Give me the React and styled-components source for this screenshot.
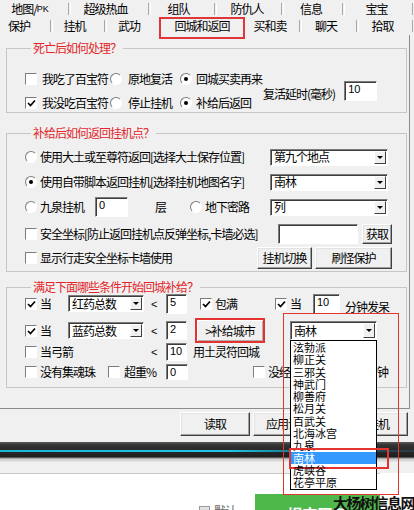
import styled, { createGlobalStyle } from 'styled-components';

const cjk = `"Noto Sans CJK SC", "Noto Sans", sans-serif`;

const GlobalStyle = createGlobalStyle`
  html, body {
    margin: 0;
    padding: 0;
  }
  body {
    background: #f0f0f0;
    font-family: ${cjk};
    font-size: 12px;
    color: #000;
  }
`;

const Screen = styled.div`
  position: relative;
  width: 414px;
  height: 510px;
  overflow: hidden;
  background: #f0f0f0;
`;

// ---- tabs
const TabRow = styled.div`
  display: flex;
  align-items: center;
  height: ${({ $h }) => $h}px;
`;

const Tab = styled.div`
  flex: none;
  width: ${({ $w }) => $w}px;
  height: 100%;
  box-sizing: border-box;
  display: flex;
  align-items: center;
  justify-content: center;
  padding-right: ${({ $pr = 7 }) => $pr}px;
  letter-spacing: -1px;
  line-height: 14px;
  white-space: nowrap;
`;

const ActiveTab = styled(Tab)`
  position: relative;
  z-index: 2;
  align-self: flex-start;
  height: 22px;
  padding: 0 0 4px;
  border: 2px solid #e0363a;
  background: #f0f0f0;
`;

const TabSep = styled.span`
  flex: none;
  width: 1px;
  height: 12px;
  border-left: 1px solid #a8a8a8;
  border-right: 1px solid #fff;
`;

const Small = styled.span`
  font-family: "Liberation Sans", Arial, sans-serif;
  font-size: 9px;
  letter-spacing: 0;
`;

// ---- panel + groups
const Panel = styled.div`
  width: 410px;
  box-sizing: border-box;
  padding: 6px 2px 20px 6px;
  border-right: 1px solid #8c8c8c;
  border-bottom: 1px solid #8c8c8c;
`;

const Group = styled.fieldset`
  margin: ${({ $mt = 0 }) => $mt}px 0 0;
  padding: ${({ $pt }) => $pt}px 0 ${({ $pb }) => $pb}px 18px;
  border: 1px solid #c6c6c6;
  min-width: 0;
`;

const Legend = styled.legend`
  color: #e3262a;
  padding: 0 2px;
  margin-left: 6px;
  font-size: 12px;
  line-height: 14px;
  letter-spacing: -1px;
`;

const Split = styled.div`
  display: flex;
  align-items: center;
`;

const Col = styled.div`
  width: 238px;
  display: flex;
  flex-direction: column;
`;

const Row = styled.div`
  display: flex;
  align-items: center;
  height: ${({ $h }) => $h}px;
  margin-top: ${({ $mt = 0 }) => $mt}px;
`;

const Text = styled.span`
  flex: none;
  width: ${({ $w }) => ($w ? `${$w}px` : 'auto')};
  margin-left: ${({ $ml = 0 }) => $ml}px;
  margin-top: ${({ $mt = 0 }) => $mt}px;
  letter-spacing: -1px;
  line-height: 14px;
  white-space: nowrap;
`;

const Lt = styled.span`
  flex: none;
  width: 22px;
  box-sizing: border-box;
  padding-left: 7px;
  font-family: "Liberation Sans", Arial, sans-serif;
  font-size: 11px;
`;

// ---- controls
const Opt = styled.div`
  flex: none;
  display: flex;
  align-items: center;
  gap: ${({ $gap = 4 }) => $gap}px;
  width: ${({ $w }) => ($w ? `${$w}px` : 'auto')};
  margin-left: ${({ $ml = 0 }) => $ml}px;
  white-space: nowrap;
`;

const Label = styled.span`
  letter-spacing: -1px;
  line-height: 14px;
`;

const CheckBox = styled.span`
  flex: none;
  width: 12px;
  height: 12px;
  box-sizing: border-box;
  background: #fff;
  border: 1px solid;
  border-color: #7c7c7c #fff #fff #7c7c7c;
  display: flex;
  align-items: center;
  justify-content: center;
`;

const RadioDot = styled.span`
  flex: none;
  width: 12px;
  height: 12px;
  box-sizing: border-box;
  border-radius: 50%;
  background: #fff;
  border: 1px solid;
  border-color: #7c7c7c #fff #fff #7c7c7c;
  display: flex;
  align-items: center;
  justify-content: center;

  &::after {
    content: '';
    width: 4px;
    height: 4px;
    border-radius: 50%;
    background: ${({ $on }) => ($on ? '#000' : 'transparent')};
  }
`;

function Check({ checked, w, ml, gap, children }) {
  return (
    <Opt $w={w} $ml={ml} $gap={gap}>
      <CheckBox>
        {checked && (
          <svg width="9" height="8" viewBox="0 0 9 8">
            <polyline points="1,4 3.5,6.5 8,1.5" fill="none" stroke="#000" strokeWidth="1.7" />
          </svg>
        )}
      </CheckBox>
      {children && <Label>{children}</Label>}
    </Opt>
  );
}

function Radio({ checked, w, ml, gap, children }) {
  return (
    <Opt $w={w} $ml={ml} $gap={gap}>
      <RadioDot $on={checked} />
      <Label>{children}</Label>
    </Opt>
  );
}

const Field = styled.div`
  flex: none;
  width: ${({ $w }) => $w}px;
  height: ${({ $h }) => $h}px;
  margin-left: ${({ $ml = 0 }) => $ml}px;
  box-sizing: border-box;
  padding: 1px 3px;
  background: #fff;
  border: 1px solid;
  border-color: #7c7c7c #fff #fff #7c7c7c;
  box-shadow: inset 1px 1px 0 #3c3c3c;
  font-family: "Liberation Sans", Arial, sans-serif;
  font-size: 11px;
  line-height: 13px;
`;

const ComboBox = styled.div`
  flex: none;
  width: ${({ $w }) => $w}px;
  height: ${({ $h }) => $h}px;
  box-sizing: border-box;
  display: flex;
  align-items: center;
  background: #fff;
  border: 1px solid;
  border-color: #7c7c7c #fff #fff #7c7c7c;
  box-shadow: inset 1px 1px 0 #3c3c3c;
`;

const ComboText = styled.span`
  flex: 1;
  padding: 0 3px;
  letter-spacing: -1px;
  line-height: 14px;
  white-space: nowrap;
`;

const ArrowBtn = styled.span`
  flex: none;
  align-self: stretch;
  width: 12px;
  margin: 1px 1px 1px 0;
  box-sizing: border-box;
  background: #f0f0f0;
  border: 1px solid;
  border-color: #fff #404040 #404040 #fff;
  display: flex;
  align-items: center;
  justify-content: center;

  &::before {
    content: '';
    border-left: 3px solid transparent;
    border-right: 3px solid transparent;
    border-top: 3px solid #000;
  }
`;

function Combo({ w, h, children }) {
  return (
    <ComboBox $w={w} $h={h}>
      <ComboText>{children}</ComboText>
      <ArrowBtn />
    </ComboBox>
  );
}

const WinButton = styled.div`
  flex: none;
  width: ${({ $w }) => $w}px;
  height: ${({ $h }) => $h}px;
  margin-left: ${({ $ml = 0 }) => $ml}px;
  box-sizing: border-box;
  display: flex;
  align-items: center;
  justify-content: center;
  background: #f0f0f0;
  border: 1px solid;
  border-color: #fff #404040 #404040 #fff;
  box-shadow: inset -1px -1px 0 #a0a0a0, inset 1px 1px 0 #e3e3e3;
  letter-spacing: -1px;
  line-height: 14px;
  white-space: nowrap;
`;

const MarkedButton = styled(WinButton)`
  border: 2px solid #e3342f;
  box-shadow: inset 1px 1px 0 #fff, inset -1px -1px 0 #b0b0b0;
`;

// ---- open dropdown
const ComboAnchor = styled.div`
  position: relative;
  z-index: 10;
  flex: none;
  margin-left: 25px;
`;

const DropList = styled.ul`
  position: absolute;
  top: 100%;
  left: 0;
  width: 87px;
  height: 150px;
  box-sizing: border-box;
  margin: 0;
  padding: 0;
  list-style: none;
  background: #fff;
  border: 1px solid #000;
`;

const DropItem = styled.li`
  position: relative;
  height: 12.3px;
  padding-left: 2px;
  font-size: 11px;
  line-height: 12.3px;
  white-space: nowrap;
  background: ${({ $sel }) => ($sel ? '#3399ff' : 'transparent')};
  color: ${({ $sel }) => ($sel ? '#fff' : '#000')};
`;

const ItemMark = styled.span`
  position: absolute;
  left: -2px;
  top: -4px;
  width: 100px;
  height: 21px;
  box-sizing: border-box;
  border: 2px solid #e3342f;
`;

const NoteFrame = styled.div`
  position: absolute;
  left: -7px;
  top: -8px;
  width: 116px;
  height: 182px;
  box-sizing: border-box;
  border: 1px solid #e3342f;
  pointer-events: none;
`;

// ---- bottom
const ButtonBar = styled.div`
  display: flex;
  justify-content: flex-end;
  gap: 3px;
  margin-top: 3px;
  padding-right: 6px;
`;

const Band = styled.div`
  margin-top: 6px;
  height: 20px;
  padding-top: 8px;
  box-sizing: border-box;
  background: linear-gradient(
    to bottom,
    #5a5a5a 0,
    #333 3px,
    #2a2a2a 8px,
    #1e1e1e 15px,
    #8e8e8e 16px,
    #c9c9c9 17px,
    #e8e8e8 20px
  );
`;

const Glow = styled.div`
  height: 2px;
  background: linear-gradient(to right, #19b6d6 0, #22c6e6 55%, #0e6a80 75%, #2a3a40 100%);
`;

const WebArea = styled.div`
  background: #fff;
  height: 48px;
`;

const HLine = styled.div`
  margin-top: 11px;
  width: 380px;
  height: 1px;
  background: #c9c9c9;
`;

const FooterRow = styled.div`
  display: flex;
  align-items: flex-start;
  margin-top: 20px;
  padding-left: 199px;
`;

const DefaultOpt = styled.div`
  width: 56px;
  display: flex;
  align-items: center;
  gap: 4px;
  margin-top: 10px;
  color: #666;
  letter-spacing: -1px;
  line-height: 14px;
`;

const SmallBox = styled.span`
  width: 9px;
  height: 8px;
  border: 1px solid #9a9a9a;
  background: linear-gradient(#e6e6e6, #cfcfcf);
`;

const GreenButton = styled.div`
  width: 125px;
  height: 30px;
  box-sizing: border-box;
  padding-top: 10px;
  background: #4fb84b;
  color: #fff;
  font-weight: bold;
  font-size: 15px;
  line-height: 20px;
  text-align: center;
`;

const Watermark = styled.div`
  position: absolute;
  right: 0;
  bottom: -2px;
  z-index: 20;
  font-family: ${cjk};
  font-weight: bold;
  font-size: 15px;
  line-height: 19px;
  letter-spacing: -1.5px;
  color: #111;
`;

const cities = ['泫勃派', '柳正关', '三邪关', '神武门', '柳善府', '松月关', '百武关', '北海冰宫', '九泉', '南林', '虎峡谷', '花亭平原'];

export default function App() {
  return (
    <Screen>
      <GlobalStyle />

      <TabRow $h={17}>
        <Tab $w={68} $pr={8}>地图/<Small>PK</Small></Tab>
        <TabSep />
        <Tab $w={77} $pr={8}>超级热血</Tab>
        <TabSep />
        <Tab $w={63} $pr={8}>组队</Tab>
        <TabSep />
        <Tab $w={64} $pr={4}>防仇人</Tab>
        <TabSep />
        <Tab $w={58} $pr={4}>信息</Tab>
        <TabSep />
        <Tab $w={67} $pr={4}>宝宝</Tab>
        <TabSep />
      </TabRow>
      <TabRow $h={18}>
        <Tab $w={50} $pr={12}>保护</Tab>
        <TabSep />
        <Tab $w={51} $pr={8}>挂机</Tab>
        <TabSep />
        <Tab $w={52} $pr={8}>武功</Tab>
        <ActiveTab $w={86}>回城和返回</ActiveTab>
        <Tab $w={54} $pr={4}>买和卖</Tab>
        <TabSep />
        <Tab $w={54} $pr={6}>聊天</Tab>
        <TabSep />
        <Tab $w={53} $pr={6}>拾取</Tab>
        <TabSep />
      </TabRow>

      <Panel>
        <Group $pt={15} $pb={0}>
          <Legend>死亡后如何处理？</Legend>
          <Split>
            <Col>
              <Row $h={18}>
                <Check w={85} gap={5}>我吃了百宝符</Check>
                <Radio w={70} gap={6}>原地复活</Radio>
                <Radio checked gap={4}>回城买卖再来</Radio>
              </Row>
              <Row $h={18} $mt={6}>
                <Check checked w={85} gap={5}>我没吃百宝符</Check>
                <Radio w={70} gap={6}>停止挂机</Radio>
                <Radio checked gap={4}>补给后返回</Radio>
              </Row>
            </Col>
            <Text $mt={5}>复活延时(毫秒)</Text>
            <Field $w={33} $h={20} $ml={9}>10</Field>
          </Split>
        </Group>

        <Group $mt={13} $pt={7} $pb={2}>
          <Legend>补给后如何返回挂机点？</Legend>
          <Row $h={20}>
            <Radio w={245} gap={3}>使用大土或至尊符返回[选择大土保存位置]</Radio>
            <Combo w={118} h={17}>第九个地点</Combo>
          </Row>
          <Row $h={20} $mt={5}>
            <Radio checked w={245} gap={3}>使用自带脚本返回挂机[选择挂机地图名字]</Radio>
            <Combo w={118} h={17}>南林</Combo>
          </Row>
          <Row $h={20} $mt={5}>
            <Radio w={70} gap={3}>九泉挂机</Radio>
            <Field $w={33} $h={20}>0</Field>
            <Text $w={35} $ml={27}>层</Text>
            <Radio w={80} gap={3}>地下密路</Radio>
            <Combo w={118} h={17}>列</Combo>
          </Row>
          <Row $h={20} $mt={7}>
            <Check w={253} gap={3}>安全坐标[防止返回挂机点反弹坐标,卡墙必选]</Check>
            <Field $w={80} $h={20} />
            <WinButton $w={30} $h={20} $ml={4}>获取</WinButton>
          </Row>
          <Row $h={22} $mt={3}>
            <Check w={232} gap={3}>显示行走安全坐标卡墙使用</Check>
            <WinButton $w={55} $h={22}>挂机切换</WinButton>
            <WinButton $w={77} $h={22} $ml={3}>刷怪保护</WinButton>
          </Row>
        </Group>

        <Group $mt={8} $pt={0} $pb={6}>
          <Legend>满足下面哪些条件开始回城补给？</Legend>
          <Row $h={19}>
            <Check checked w={43} gap={3}>当</Check>
            <Combo w={76} h={17}>红药总数</Combo>
            <Lt>&lt;</Lt>
            <Field $w={21} $h={20}>5</Field>
            <Check checked w={75} ml={13} gap={3}>包满</Check>
            <Check checked w={38} gap={3}>当</Check>
            <Field $w={27} $h={20}>10</Field>
            <Text $ml={5} $mt={6}>分钟发呆</Text>
          </Row>
          <Row $h={25} $mt={5}>
            <Check checked w={43} gap={3}>当</Check>
            <Combo w={76} h={17}>蓝药总数</Combo>
            <Lt>&lt;</Lt>
            <Field $w={21} $h={19}>2</Field>
            <MarkedButton $w={70} $h={25} $ml={8}>&gt;补给城市</MarkedButton>
            <ComboAnchor>
              <Combo w={87} h={19}>南林</Combo>
              <DropList>
                {cities.map((c) => (
                  <DropItem key={c} $sel={c === '南林'}>
                    {c}
                    {c === '南林' && <ItemMark />}
                  </DropItem>
                ))}
              </DropList>
              <NoteFrame />
            </ComboAnchor>
          </Row>
          <Row $h={18}>
            <Check w={119} gap={3}>当弓箭</Check>
            <Lt>&lt;</Lt>
            <Field $w={21} $h={18}>10</Field>
            <Text $ml={6}>用土灵符回城</Text>
          </Row>
          <Row $h={18} $mt={2}>
            <Check w={83} gap={3}>没有集魂珠</Check>
            <Check w={58} gap={4}>超重%</Check>
            <Field $w={22} $h={16}>0</Field>
            <Check ml={65} gap={3}>没经验</Check>
            <Field $w={40} $h={16} $ml={8}>5</Field>
            <Text $ml={17}>分钟</Text>
          </Row>
        </Group>
      </Panel>

      <ButtonBar>
        <WinButton $w={70} $h={24}>读取</WinButton>
        <WinButton $w={70} $h={24}>应用设置</WinButton>
        <WinButton $w={82} $h={24}>开始挂机</WinButton>
      </ButtonBar>

      <Band>
        <Glow />
      </Band>

      <WebArea>
        <HLine />
        <FooterRow>
          <DefaultOpt>
            <SmallBox />
            默认
          </DefaultOpt>
          <GreenButton>提交回复</GreenButton>
        </FooterRow>
      </WebArea>

      <Watermark>大杨树信息网</Watermark>
    </Screen>
  );
}
